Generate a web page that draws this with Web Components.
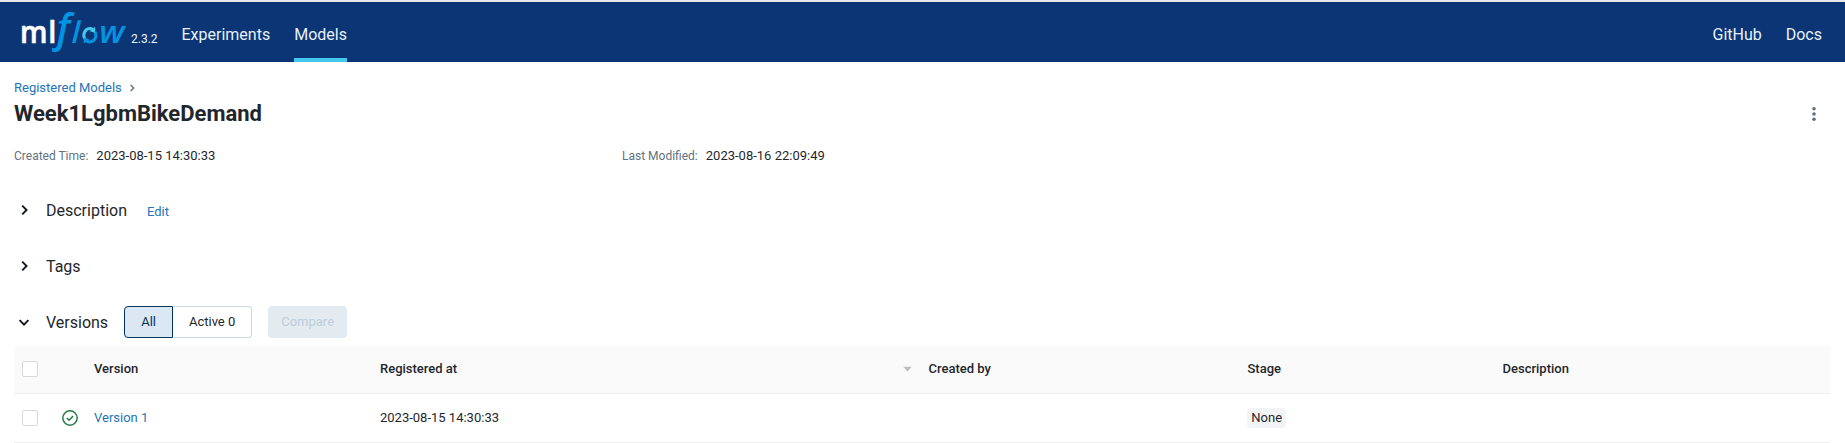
<!DOCTYPE html>
<html lang="en">
<head>
<meta charset="utf-8">
<title>MLflow – Week1LgbmBikeDemand</title>
<style>
html,body{margin:0;background:#fff}
body{font:13px/20px Roboto,"Liberation Sans",sans-serif;color:#1f272d}
</style>
</head>
<body>
<ml-app></ml-app>
<script>
const define = (name, html) => customElements.define(name, class extends HTMLElement {
  constructor() {
    super();
    const t = document.createElement('template');
    t.innerHTML = html;
    this.attachShadow({mode: 'open'}).appendChild(t.content.cloneNode(true));
  }
});

define('ml-logo', `<style>:host{display:block;width:112px;height:60px}svg{display:block;overflow:visible}</style>
<svg width="112" height="60" viewBox="20 2 112 60" font-family="Open Sans" font-weight="600" font-size="30">
  <text transform="translate(20 43) scale(.96 1)" x="0 29.4" fill="#fff" stroke="#fff" stroke-width=".6">ml</text>
  <g fill="#0194e2" font-style="italic">
    <text x="56.6" y="41.6" font-size="39.5">f</text>
    <text transform="translate(71.6 43) skewX(-2)">l</text>
    <text transform="translate(99.3 43) scale(1.12 1)">w</text>
  </g>
  <g fill="none" stroke-width="3">
    <path d="M84.6 38.6C82.3 33.8 85.4 28.5 90.2 28.6Q91.6 28.6 92.8 29.5" stroke="#43c9ed"/>
    <path d="M95 31.8C97.4 36.6 94.6 41.6 89.8 41.9Q88 42 86.4 41" stroke="#0194e2"/>
  </g>
  <path d="M95.2 26.8v6l-5.6-1.6z" fill="#43c9ed"/>
  <path d="M83.7 43.6v-6l5.6 1.7z" fill="#0194e2"/>
</svg>`);

define('ml-nav-link', `<style>
:host{display:flex;box-sizing:border-box;height:60px;align-items:center;font-size:16px;line-height:20px;color:#e7f1fb;border-bottom:4px solid transparent;padding-top:9px}
:host([active]){border-color:#43c9ed}
</style><slot></slot>`);

define('ml-header', `<style>
:host{display:flex;height:60px;background:#0b3574;border-top:2px solid #e7e7e7;padding:0 23px 0 20px;color:#e7f1fb}
.v{font-size:12px;line-height:16px;margin:29px 24.5px 0 -1px;width:26px}
nav{display:flex;gap:24px}
.right{margin-left:auto}
</style>
<ml-logo></ml-logo><span class="v">2.3.2</span>
<nav><ml-nav-link>Experiments</ml-nav-link><ml-nav-link active>Models</ml-nav-link></nav>
<nav class="right"><ml-nav-link>GitHub</ml-nav-link><ml-nav-link>Docs</ml-nav-link></nav>`);

define('ml-title', `<style>
:host{display:block;padding-top:15px}
.b{display:flex;align-items:center;height:21px;color:#2374bb}
.b svg{margin-left:8.5px}
.t{display:flex;align-items:center;justify-content:space-between;height:32px;padding-right:14px}
h1{margin:0;font-size:22px;line-height:28px;font-weight:700}
</style>
<div class="b"><a>Registered Models</a><svg width="5" height="8" viewBox="0 0 5 8"><path d="M.7 1l3 3-3 3" fill="none" stroke="#5f7281" stroke-width="1.4"/></svg></div>
<div class="t"><h1>Week1LgbmBikeDemand</h1><svg width="4" height="14" viewBox="0 0 4 14" fill="#5f7281"><circle cx="2" cy="1.8" r="1.8"/><circle cx="2" cy="7" r="1.8"/><circle cx="2" cy="12.2" r="1.8"/></svg></div>`);

define('ml-meta', `<style>
:host{display:flex;gap:8px;line-height:20px}
.k{color:#5f7281;font-size:12px}
</style><span class="k"><slot name="label"></slot></span><span><slot></slot></span>`);

define('ml-section', `<style>
:host{display:flex;align-items:center;height:32px;font-size:16px}
.c{display:flex;width:32px;padding-left:4px;box-sizing:border-box}
svg{margin:-1px 0 1px}
:host([open]) svg{transform:rotate(90deg);margin:0}
</style><span class="c"><svg width="12" height="12" viewBox="0 0 12 12"><path d="M4.2 1.6L8.6 6 4.2 10.4" fill="none" stroke="#11171c" stroke-width="1.9"/></svg></span><slot></slot>`);

define('ml-check', `<style>:host{display:block;box-sizing:border-box;width:16px;height:16px;border:1px solid #d9d9d9;border-radius:2px;background:#fff}</style>`);

define('ml-row', `<style>
:host{display:grid;grid-template-columns:40px 32px 286px 548.5px 319px 255px 1fr;height:48px;align-items:center;border-bottom:1px solid #eee}
:host([head]){height:46px;padding-bottom:1px;background:#fafafa;font-weight:500}
::slotted(*){padding:0 8px}
</style><slot></slot>`);

define('ml-versions', `<style>
:host{display:block}
ml-row>div{display:flex;align-items:center;justify-content:space-between}
a{color:#2374bb}
.sort{margin-right:1px}
.n{background:#f3f4f5;border-radius:4px;padding:0 4.3px;margin-left:-.5px}
</style>
<ml-row head><div><ml-check></ml-check></div><div></div><div>Version</div>
<div>Registered at<svg class="sort" width="9" height="6" viewBox="0 0 9 6"><path d="M.3.7h8.4L4.5 5.5z" fill="#bfbfbf"/></svg></div>
<div>Created by</div><div>Stage</div><div>Description</div></ml-row>
<ml-row><div><ml-check></ml-check></div>
<div><svg width="16" height="16" viewBox="0 0 16 16" fill="none" stroke="#277c43" stroke-width="1.5"><circle cx="8" cy="8" r="7.2"/><path d="M4.8 8l2.2 2.2 4.1-4.1"/></svg></div>
<div><a>Version 1</a></div><div>2023-08-15 14:30:33</div><div></div><div><span class="n">None</span></div><div></div></ml-row>`);

define('ml-app', `<style>
:host{display:block}
main{padding:0 15px 0 14px}
.m{display:grid;grid-template-columns:608px 1fr;margin-top:16px}
.s1{margin-top:29px}.s2{margin-top:24px}.s3{margin-top:23px;margin-bottom:8px}
.s3>span{margin-top:1px}
.edit{font-size:13px;color:#2374bb;margin:2px 0 0 20px}
.seg{display:flex;margin-left:16px;font-size:13px}
.seg span,.cmp{display:flex;box-sizing:border-box;height:32px;align-items:center;justify-content:center}
.all{width:49px;background:#dbe7f3;border:1px solid #04355d;border-radius:4px 0 0 4px;color:#04355d}
.act{width:79px;border:1px solid #c9d8e4;border-left:0;border-radius:0 4px 4px 0}
.cmp{width:79px;margin-left:16px;border-radius:4px;background:#e4ebf0;color:#bdcddb;font-size:13px}
</style>
<ml-header></ml-header>
<main>
<ml-title></ml-title>
<div class="m"><ml-meta><span slot="label">Created Time:</span>2023-08-15 14:30:33</ml-meta><ml-meta><span slot="label">Last Modified:</span>2023-08-16 22:09:49</ml-meta></div>
<ml-section class="s1"><span>Description</span><a class="edit">Edit</a></ml-section>
<ml-section class="s2"><span>Tags</span></ml-section>
<ml-section class="s3" open><span>Versions</span><div class="seg"><span class="all">All</span><span class="act">Active 0</span></div><div class="cmp">Compare</div></ml-section>
<ml-versions></ml-versions>
</main>`);
</script>
</body>
</html>
